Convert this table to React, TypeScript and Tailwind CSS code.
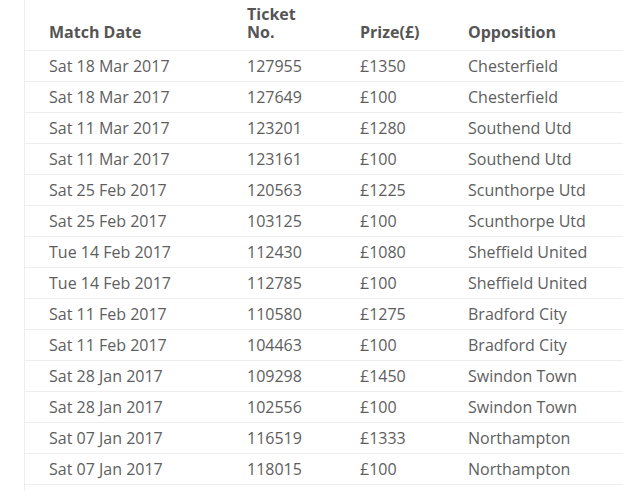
const rows = [
  ['Sat 18 Mar 2017', '127955', '£1350', 'Chesterfield'],
  ['Sat 18 Mar 2017', '127649', '£100', 'Chesterfield'],
  ['Sat 11 Mar 2017', '123201', '£1280', 'Southend Utd'],
  ['Sat 11 Mar 2017', '123161', '£100', 'Southend Utd'],
  ['Sat 25 Feb 2017', '120563', '£1225', 'Scunthorpe Utd'],
  ['Sat 25 Feb 2017', '103125', '£100', 'Scunthorpe Utd'],
  ['Tue 14 Feb 2017', '112430', '£1080', 'Sheffield United'],
  ['Tue 14 Feb 2017', '112785', '£100', 'Sheffield United'],
  ['Sat 11 Feb 2017', '110580', '£1275', 'Bradford City'],
  ['Sat 11 Feb 2017', '104463', '£100', 'Bradford City'],
  ['Sat 28 Jan 2017', '109298', '£1450', 'Swindon Town'],
  ['Sat 28 Jan 2017', '102556', '£100', 'Swindon Town'],
  ['Sat 07 Jan 2017', '116519', '£1333', 'Northampton'],
  ['Sat 07 Jan 2017', '118015', '£100', 'Northampton'],
]

const App = () => {
  return (
    <div className="bg-white min-h-[491px] font-['Open_Sans',sans-serif] text-[#5e5e5e]">
      {/* panel with left rule */}
      <div className="ml-[24px] border-l border-[#eee] min-h-[491px]">
        <table className="w-[598px] table-fixed border-collapse text-[16px]">
          <colgroup>
            <col className="w-[198px]" />
            <col className="w-[113px]" />
            <col className="w-[108px]" />
            <col className="w-[179px]" />
          </colgroup>
          <thead>
            <tr className="border-b border-[#eee] h-[50px]">
              <th className="pl-[24px] pb-[9px] align-bottom text-left font-bold leading-[18px] text-[#555]">Match Date</th>
              <th className="pl-[24px] pb-[9px] align-bottom text-left font-bold leading-[18px] text-[#555]">
                Ticket
                <br />
                No.
              </th>
              <th className="pl-[24px] pb-[9px] align-bottom text-left font-bold leading-[18px] text-[#555]">Prize(£)</th>
              <th className="pl-[24px] pb-[9px] align-bottom text-left font-bold leading-[18px] text-[#555]">Opposition</th>
            </tr>
          </thead>
          <tbody>
            {rows.map((r, i) => (
              <tr key={i} className="border-b border-[#eee] h-[30px]">
                {r.map((c, j) => (
                  <td key={j} className="pl-[24px] py-[4px] leading-[22px] whitespace-nowrap">
                    {c}
                  </td>
                ))}
              </tr>
            ))}
          </tbody>
        </table>
      </div>
    </div>
  )
}

export default App
